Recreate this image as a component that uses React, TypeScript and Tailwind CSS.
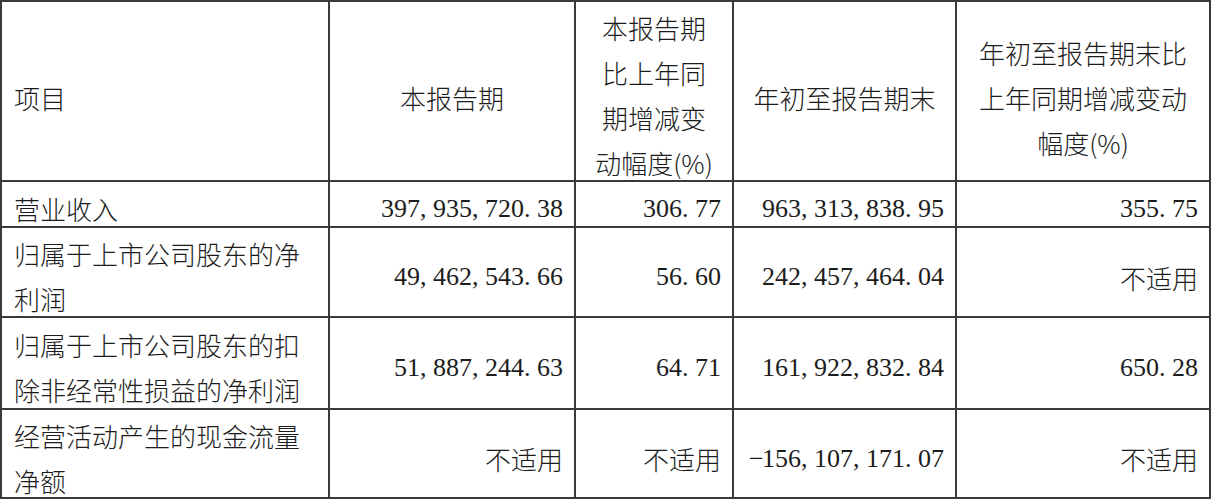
import React from 'react';

const cjk = "font-['Noto_Sans_CJK_SC',sans-serif] font-light";

type Cell = { text: string; num?: boolean };

const rows: { label: string[]; cells: Cell[] }[] = [
  {
    label: ['营业收入'],
    cells: [
      { text: '397,935,720.38', num: true },
      { text: '306.77', num: true },
      { text: '963,313,838.95', num: true },
      { text: '355.75', num: true },
    ],
  },
  {
    label: ['归属于上市公司股东的净', '利润'],
    cells: [
      { text: '49,462,543.66', num: true },
      { text: '56.60', num: true },
      { text: '242,457,464.04', num: true },
      { text: '不适用' },
    ],
  },
  {
    label: ['归属于上市公司股东的扣', '除非经常性损益的净利润'],
    cells: [
      { text: '51,887,244.63', num: true },
      { text: '64.71', num: true },
      { text: '161,922,832.84', num: true },
      { text: '650.28', num: true },
    ],
  },
  {
    label: ['经营活动产生的现金流量', '净额'],
    cells: [
      { text: '不适用' },
      { text: '不适用' },
      { text: '-156,107,171.07', num: true },
      { text: '不适用' },
    ],
  },
];

// monospaced figures like the SimSun original: every char takes half an em
function Num({ value }: { value: string }) {
  return (
    <span className="font-['Liberation_Serif',serif] text-[26px] leading-[30px] whitespace-nowrap">
      {value.split('').map((ch, i) =>
        ch === ',' || ch === '.' || ch === '-' ? (
          <span key={i} className="inline-block w-[13px] text-left">
            {ch === '-' ? '\u2212' : ch}
          </span>
        ) : (
          <span key={i} className="inline-block w-[13px] text-center">
            {ch}
          </span>
        )
      )}
    </span>
  );
}

function Lines({ lines, className = '' }: { lines: string[]; className?: string }) {
  return (
    <div className={`${cjk} text-[26px] leading-[45px] ${className}`}>
      {lines.map((l) => (
        <div key={l}>{l}</div>
      ))}
    </div>
  );
}

export default function App() {
  return (
    <div className="bg-white w-[1211px] h-[500px] text-[#1c1c1c]">
      <div className="grid grid-cols-[326px_244px_156px_221px_252px] grid-rows-[178px_44px_88px_90px_87px] gap-[2px] p-[2px] bg-[#3a3a3a] w-[1211px]">
        {/* header */}
        <div className="bg-white flex items-center pl-[12px] pt-[12px]">
          <Lines lines={['项目']} />
        </div>
        <div className="bg-white flex items-center justify-center pt-[12px]">
          <Lines lines={['本报告期']} />
        </div>
        <div className="bg-white flex items-center justify-center pt-[8px] overflow-hidden">
          <Lines lines={['本报告期', '比上年同', '期增减变', '动幅度(%)']} className="leading-[44.5px] text-center" />
        </div>
        <div className="bg-white flex items-center justify-center pt-[12px]">
          <Lines lines={['年初至报告期末']} />
        </div>
        <div className="bg-white flex items-center justify-center pt-[12px]">
          <Lines lines={['年初至报告期末比', '上年同期增减变动', '幅度(%)']} className="text-center" />
        </div>

        {rows.map((r) => (
          <React.Fragment key={r.label[0]}>
            <div className="bg-white flex items-center pl-[12px] pt-[8px]">
              <Lines lines={r.label} />
            </div>
            {r.cells.map((c, i) => (
              <div key={i} className="bg-white flex items-center justify-end pr-[11px] pt-[10px]">
                {c.num ? <Num value={c.text} /> : <Lines lines={[c.text]} />}
              </div>
            ))}
          </React.Fragment>
        ))}
      </div>
    </div>
  );
}
